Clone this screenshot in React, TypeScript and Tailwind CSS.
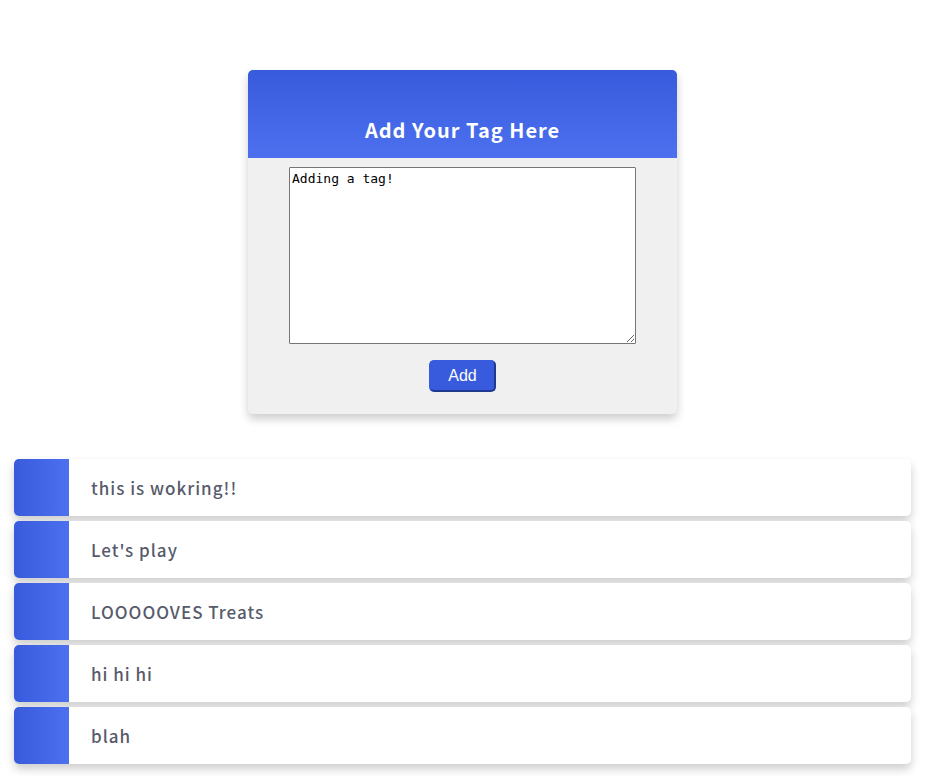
import { useState } from "react";
import type { FormEvent } from "react";

const initialTags = ["this is wokring!!", "Let's play", "LOOOOOVES Treats", "hi hi hi", "blah"];

function TagRow({ text }: { text: string }) {
  return (
    <li className="flex h-[57px] overflow-hidden rounded-[5px] bg-white shadow-[0_5px_10px_rgba(0,0,0,0.2)]">
      <span className="w-[55px] shrink-0 bg-linear-to-r from-[#375bdc] to-[#4c70ee]" />
      <span className="flex items-center pl-[22px] text-[17px] leading-6 font-medium tracking-[1px] text-[#575b6b]">
        {text}
      </span>
    </li>
  );
}

export default function App() {
  const [tags, setTags] = useState(initialTags);
  const [draft, setDraft] = useState("Adding a tag!");

  function addTag(event: FormEvent) {
    event.preventDefault();
    if (!draft.trim()) return;
    setTags([...tags, draft]);
    setDraft("");
  }

  return (
    <main className="flex flex-col items-center bg-white pt-[70px] pr-[17px] pb-3 pl-[14px] font-['Noto_Sans_CJK_JP','Noto_Sans',sans-serif]">
      <form
        onSubmit={addTag}
        className="flex w-[429px] max-w-full flex-col items-center overflow-hidden rounded-[5px] bg-[#f0f0f0] pb-[22px] shadow-[0_5px_10px_rgba(0,0,0,0.2)]"
      >
        <label
          htmlFor="tag"
          className="flex h-[88px] w-full items-end justify-center bg-linear-to-b from-[#375bdc] to-[#4c70ee] pb-3 text-[20px] leading-8 font-bold tracking-[1px] text-white"
        >
          Add Your Tag Here
        </label>
        <textarea
          id="tag"
          value={draft}
          onChange={(event) => setDraft(event.target.value)}
          className="mt-[9px] block h-[177px] w-[347px] max-w-full resize rounded-[1px] border border-[#767676] bg-white p-[2px] font-['DejaVu_Sans_Mono',monospace] text-[13px] leading-[17px] text-black outline-none"
        />
        <button
          type="submit"
          className="mt-4 h-8 w-[67px] rounded-[5px] border-2 border-t-[#375bdc] border-r-[#213a91] border-b-[#213a91] border-l-[#375bdc] bg-[#375bdc] font-['Liberation_Sans',sans-serif] text-[16px] leading-4 text-white"
        >
          Add
        </button>
      </form>
      <ul className="mt-[45px] flex w-full flex-col gap-[5px]">
        {tags.map((tag, index) => (
          <TagRow key={index} text={tag} />
        ))}
      </ul>
    </main>
  );
}
